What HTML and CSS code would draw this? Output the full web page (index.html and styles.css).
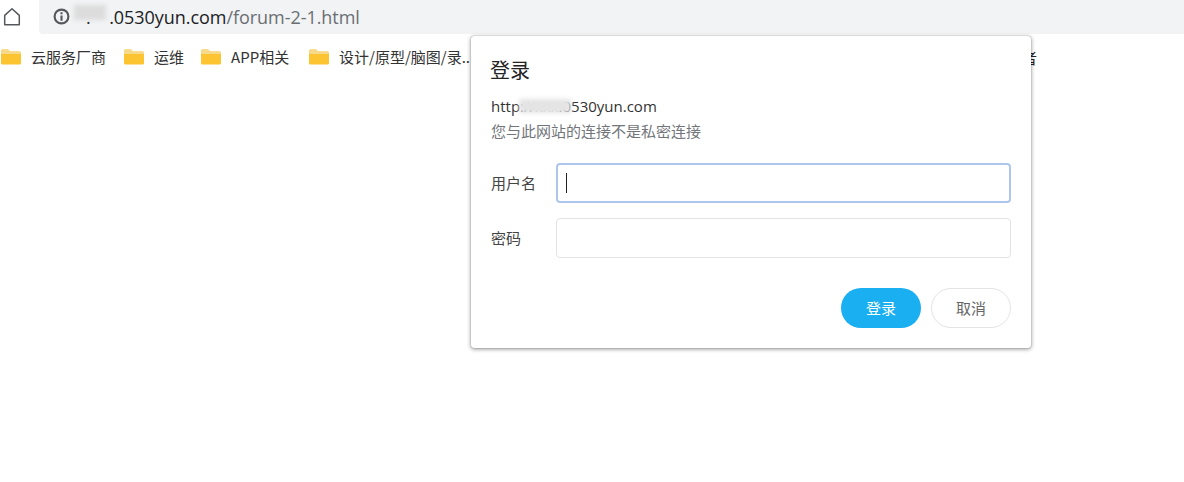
FILE: index.html
```html
<!DOCTYPE html>
<html lang="zh-CN">
<head>
<meta charset="utf-8">
<title>登录</title>
<link rel="stylesheet" href="styles.css">
</head>
<body>
<header class="toolbar">
  <svg class="home" width="20" height="20" viewBox="0 0 20 20" fill="none"><path d="M2.700 8.400 10 1.800l7.300 6.600v9.400H2.700z" stroke="#55585c" stroke-width="1.500" stroke-linejoin="round"/></svg>
  <div class="omnibox">
    <svg class="info" width="17" height="17" viewBox="0 0 16 16" fill="none"><circle cx="8" cy="8" r="6.500" stroke="#55585c" stroke-width="2"/><path d="M8 4v1.800M8 7v5" stroke="#55585c" stroke-width="2"/></svg>
    <span class="url"><span class="host">.&nbsp;&nbsp;&nbsp;&nbsp;.0530yun.com</span>/forum-2-1.html</span>
    <span class="smudge smudge-url"></span>
  </div>
</header>
<nav class="bookmarks">
  <a class="bm"><svg class="folder" width="20" height="16" viewBox="0 0 20 16"><path d="M0 2a1.500 1.500 0 0 1 1.500-1.500h5.500l2 2h9.500A1.500 1.500 0 0 1 20 4v10a1.500 1.500 0 0 1-1.500 1.500h-17A1.500 1.500 0 0 1 0 14z" fill="#fdc431"/><path d="M0 2a1.500 1.500 0 0 1 1.500-1.500h5.500l2 2h9.500A1.500 1.500 0 0 1 20 4v1H0z" fill="#f7d98a"/></svg>云服务厂商</a>
  <a class="bm bm2"><svg class="folder" width="20" height="16" viewBox="0 0 20 16"><path d="M0 2a1.500 1.500 0 0 1 1.500-1.500h5.500l2 2h9.500A1.500 1.500 0 0 1 20 4v10a1.500 1.500 0 0 1-1.500 1.500h-17A1.500 1.500 0 0 1 0 14z" fill="#fdc431"/><path d="M0 2a1.500 1.500 0 0 1 1.500-1.500h5.500l2 2h9.500A1.500 1.500 0 0 1 20 4v1H0z" fill="#f7d98a"/></svg>运维</a>
  <a class="bm bm3"><svg class="folder" width="20" height="16" viewBox="0 0 20 16"><path d="M0 2a1.500 1.500 0 0 1 1.500-1.500h5.500l2 2h9.500A1.500 1.500 0 0 1 20 4v10a1.500 1.500 0 0 1-1.500 1.500h-17A1.500 1.500 0 0 1 0 14z" fill="#fdc431"/><path d="M0 2a1.500 1.500 0 0 1 1.500-1.500h5.500l2 2h9.500A1.500 1.500 0 0 1 20 4v1H0z" fill="#f7d98a"/></svg>APP相关</a>
  <a class="bm bm4"><svg class="folder" width="20" height="16" viewBox="0 0 20 16"><path d="M0 2a1.500 1.500 0 0 1 1.500-1.500h5.500l2 2h9.500A1.500 1.500 0 0 1 20 4v10a1.500 1.500 0 0 1-1.500 1.500h-17A1.500 1.500 0 0 1 0 14z" fill="#fdc431"/><path d="M0 2a1.500 1.500 0 0 1 1.500-1.500h5.500l2 2h9.500A1.500 1.500 0 0 1 20 4v1H0z" fill="#f7d98a"/></svg>设计/原型/脑图/录..</a>
  <span class="hidden-bm">者</span>
</nav>
<section class="dialog">
  <h1 class="title">登录</h1>
  <div class="origin">http://<span class="dim">xxx</span>.0530yun.com<span class="smudge smudge-origin"></span></div>
  <p class="note">您与此网站的连接不是私密连接</p>
  <div class="row">
    <label class="label">用户名</label>
    <div class="field field-focus"><span class="caret"></span></div>
  </div>
  <div class="row row-pw">
    <label class="label">密码</label>
    <div class="field"></div>
  </div>
  <div class="actions">
    <button class="btn btn-primary">登录</button>
    <button class="btn btn-cancel">取消</button>
  </div>
</section>
</body>
</html>
```
FILE: styles.css
```css
* { box-sizing: border-box; }
html, body { margin: 0; padding: 0; }
body {
  width: 1184px;
  height: 482px;
  overflow: hidden;
  background: #fff;
  position: relative;
  font-family: "Noto Sans CJK SC", "Open Sans", sans-serif;
  color: #333;
}
.toolbar { display: flex; height: 34px; align-items: flex-start; }
.home { margin: 7px 0 0 2px; flex: none; }
.omnibox {
  position: relative;
  display: flex;
  align-items: center;
  width: 1145px;
  height: 34px;
  margin-left: 17px;
  padding-left: 14px;
  background: #f1f3f4;
  border-bottom-left-radius: 4px;
}
.info { flex: none; margin-top: -1px; }
.url {
  margin-left: 16px;
  font: 18px/34px "Open Sans", sans-serif;
  letter-spacing: -0.050px;
  color: #6b6f73;
  white-space: nowrap;
  margin-top: -1px;
}
.host { color: #202124; }
.smudge { position: absolute; background: #d9d9d9; filter: blur(2px); }
.smudge-url { left: 35px; top: 5px; width: 32px; height: 15px; background: #dcdcdc; }
.bookmarks {
  display: flex;
  align-items: center;
  height: 46px;
  padding-left: 1px;
  white-space: nowrap;
}
.bm {
  display: flex;
  align-items: center;
  gap: 10px;
  font-size: 15px;
  line-height: 20px;
  color: #333;
  margin-right: 18px;
}
.bm2 { margin-right: 17px; }
.bm3 { width: 108px; margin-right: 0; }
.bm4 { margin-right: 0; width: 712px; }
.hidden-bm { font-size: 15px; color: #222; margin-left: 1px; }
.folder { flex: none; }
.dialog {
  position: absolute;
  left: 471px;
  top: 36px;
  width: 560px;
  height: 312px;
  padding: 19px;
  background: #fff;
  border-radius: 3px;
  box-shadow: 0 0 1px rgba(0,0,0,.45), 0 1px 4px rgba(0,0,0,.45);
}
.title { margin: 0; font-size: 20px; font-weight: 400; line-height: 30px; color: #222; }
.origin {
  position: relative;
  margin: 11px 0 0 1px;
  font: 15px/20px "Open Sans", "Noto Sans CJK SC", sans-serif;
  color: #333;
}
.dim { color: #aaa; }
.smudge-origin { left: 28px; top: 3px; width: 52px; height: 14px; background: #e4e4e4; }
.note { margin: 5px 0 0 1px; font-size: 15px; line-height: 20px; color: #72767a; }
.row { display: flex; align-items: center; margin-top: 22px; margin-left: 1px; }
.row-pw { margin-top: 15px; }
.label { width: 65px; font-size: 15px; color: #444; padding-bottom: 2px; }
.field {
  position: relative;
  width: 455px;
  height: 40px;
  border: 1px solid #e3e3e3;
  border-radius: 4px;
  background: #fff;
}
.field-focus { border: 2px solid #aec6ec; }
.caret { position: absolute; left: 8px; top: 8px; width: 1px; height: 20px; background: #222; }
.actions { display: flex; justify-content: flex-end; gap: 10px; margin-top: 30px; margin-right: 1px; }
.btn {
  width: 80px;
  height: 40px;
  border-radius: 20px;
  font: 15px "Noto Sans CJK SC", sans-serif;
  padding: 0 0 2px;
}
.btn-primary { border: 0; background: #1aaff0; color: #fff; }
.btn-cancel { border: 1px solid #e4e4e4; background: #fff; color: #666; }
```
